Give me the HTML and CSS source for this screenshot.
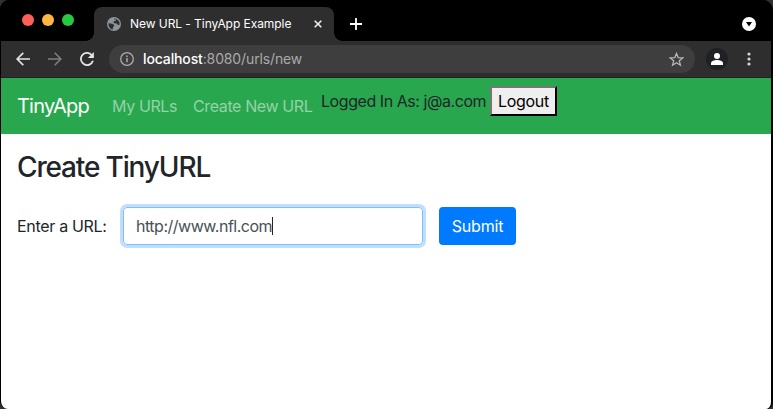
FILE: index.html
```html
<!DOCTYPE html>
<html lang="en">
<head>
<meta charset="utf-8">
<title>New URL - TinyApp Example</title>
<link rel="stylesheet" href="styles.css">
</head>
<body>
<div class="window">
  <div class="tabstrip">
    <div class="lights"><i class="red"></i><i class="yellow"></i><i class="green"></i></div>
    <div class="tab">
      <svg class="globe" width="14" height="14" viewBox="0 0 14 14"><circle cx="7" cy="7" r="7" fill="#8c949c"/><path d="M1.500 6.200 5 6.800l2 1 .2 1.500-1.300.8v2.300C3.200 12.300 1.300 9.500 1.500 6.200ZM7.200 1.400c2.800 0 5 2.200 5.400 4.500l-.3 2.100-1.700-.2-.9-1.300-2.500-.2-1-1.200 1.300-1.100 1.600-.2-.2-1.200-1.900-.2Z" fill="#2e2e2e"/></svg>
      <span class="tab-title">New URL - TinyApp Example</span>
      <svg class="close" width="8" height="8" viewBox="0 0 8 8"><path d="m.7.7 6.600 6.600m0-6.600L.7 7.300" stroke="#eee" stroke-width="1.600"/></svg>
    </div>
    <svg class="plus" width="12" height="12" viewBox="0 0 12 12"><path d="M6 0v12M0 6h12" stroke="#fff" stroke-width="1.800"/></svg>
    <svg class="tab-search" width="14" height="14" viewBox="0 0 14 14"><circle cx="7" cy="7" r="7" fill="#fff"/><path d="M4 5h6L7 9.400Z" fill="#000"/></svg>
  </div>
  <div class="toolbar">
    <svg class="back" width="14" height="14" viewBox="0 0 14 14"><path d="M14 7H1.500M7.300.8 1.100 7l6.200 6.200" fill="none" stroke="#e4e4e4" stroke-width="1.700"/></svg>
    <svg class="forward" width="14" height="14" viewBox="0 0 14 14"><path d="M0 7h12.500M6.700.8 12.900 7l-6.200 6.200" fill="none" stroke="#808080" stroke-width="1.500"/></svg>
    <svg class="reload" width="14" height="14" viewBox="0 0 14 14"><path d="M12.900 8.700A6.100 6.100 0 1 1 11.500 2.800" fill="none" stroke="#e4e4e4" stroke-width="1.800"/><path d="M13.900 0v6H7.900Z" fill="#e4e4e4"/></svg>
    <div class="address">
      <svg class="info" width="14" height="14" viewBox="0 0 14 14"><circle cx="7" cy="7" r="6.300" fill="none" stroke="#aaadb1" stroke-width="1.300"/><path d="M7 6v4.300M7 3.500V5" stroke="#aaadb1" stroke-width="1.500"/></svg>
      <span class="url"><b>localhost</b>:8080/urls/new</span>
      <svg class="star" width="15" height="15" viewBox="0 0 15 15"><path d="m7.500 1.500 1.700 4.100 4.500.3-3.400 2.900 1.100 4.400-3.900-2.400-3.900 2.400 1.100-4.400L1.300 5.900l4.500-.3Z" fill="none" stroke="#b7b8b9" stroke-width="1.300"/></svg>
    </div>
    <svg class="avatar" width="22" height="22" viewBox="0 0 22 22"><circle cx="11" cy="11" r="11" fill="#202125"/><circle cx="11" cy="8" r="3" fill="#fff"/><path d="M5 17v-1.800C5 13 8.500 12 11 12s6 1 6 3.200V17Z" fill="#fff"/></svg>
    <svg class="dots" width="4" height="14" viewBox="0 0 4 14"><g fill="#d6d6d6"><circle cx="2" cy="2" r="1.600"/><circle cx="2" cy="7" r="1.600"/><circle cx="2" cy="12" r="1.600"/></g></svg>
  </div>
  <div class="page">
    <nav class="navbar">
      <a class="brand">TinyApp</a>
      <a class="link my-urls">My URLs</a>
      <a class="link create">Create New URL</a>
      <div class="session"><span class="user">Logged In As: j@a.com</span><button class="logout">Logout</button></div>
    </nav>
    <main>
      <h3>Create TinyURL</h3>
      <form class="form">
        <label class="label">Enter a URL:</label>
        <div class="field"><span class="value">http://www.nfl.com</span><i class="caret"></i></div>
        <button type="button" class="submit">Submit</button>
      </form>
    </main>
  </div>
</div>
</body>
</html>
```
FILE: styles.css
```css
* { box-sizing: border-box; }
body { margin: 0; background: #303030; font: 16px/24px Inter, sans-serif; color: #212529; overflow: hidden; }
svg { display: block; flex: none; }
button { font: inherit; margin: 0; white-space: nowrap; }
.window { width: 773px; height: 409px; border: solid #000; border-width: 0 2px 0 1px; border-radius: 9px 10px 7px 8px; overflow: hidden; background: #000; display: flex; flex-direction: column; }
.tabstrip { height: 41px; flex: none; background: #000; display: flex; align-items: flex-start; }
.lights { display: flex; gap: 8px; padding: 14px 0 0 21px; width: 93px; flex: none; }
.lights i { width: 12px; height: 12px; border-radius: 50%; }
.red { background: #ff5f57; }
.yellow { background: #ffb83d; }
.green { background: #28c840; }
.tab { position: relative; width: 240px; height: 34px; margin-top: 7px; padding: 0 12px 0 13px; border-radius: 8px 8px 0 0; background: #2e2e2e; display: flex; align-items: center; flex: none; }
.tab::before, .tab::after { content: ""; position: absolute; bottom: 0; width: 8px; height: 8px; }
.tab::before { left: -8px; background: radial-gradient(circle at 0 0, transparent 7.5px, #2e2e2e 8px); }
.tab::after { right: -8px; background: radial-gradient(circle at 100% 0, transparent 7.5px, #2e2e2e 8px); }
.tab-title { margin-left: 9px; width: 162px; color: #fff; font-size: 12px; letter-spacing: -.06px; white-space: nowrap; }
.close { margin-left: 22px; }
.plus { margin: 18px 0 0 16px; }
.tab-search { margin: 17px 15px 0 auto; }
.toolbar { height: 37px; flex: none; background: #2e2e2e; border-bottom: 1px solid #212121; display: flex; align-items: center; padding-left: 15px; }
.forward { margin-left: 18px; }
.reload { margin-left: 18px; }
.address { width: 586px; height: 28px; margin-left: 15px; border-radius: 14px; background: #3e3e3e; display: flex; align-items: center; padding: 0 11px; flex: none; }
.url { margin-left: 9px; font-size: 14px; color: #aaa; white-space: nowrap; letter-spacing: -.13px; }
.url b { color: #fff; font-weight: 500; }
.star { margin-left: auto; }
.avatar { margin-left: 11px; }
.dots { margin-left: 19px; }
.page { flex: 1; background: #fff; }
.navbar { height: 56px; padding: 8px 16px; background: #28a74e; display: flex; align-items: center; white-space: nowrap; }
.brand { width: 95px; color: #fff; font-size: 20px; line-height: 30px; letter-spacing: -.8px; }
.link { color: #94d3a6; }
.my-urls { width: 81px; letter-spacing: -.38px; }
.create { width: 128px; letter-spacing: -.38px; }
.session { align-self: flex-start; display: flex; align-items: center; height: 30px; }
.user { width: 169px; letter-spacing: -.44px; }
.logout { width: 67px; height: 30px; padding: 0; border: 2px outset #767676; border-color: #767676 #212121 #212121 #767676; border-radius: 0; background: #efefef; color: #000; letter-spacing: -.3px; }
main { padding: 16px; }
h3 { margin: 0; font-size: 28px; line-height: 34px; font-weight: 550; letter-spacing: -1.15px; }
.form { display: flex; align-items: center; margin-top: 23px; }
.label { width: 106px; letter-spacing: -.31px; white-space: nowrap; }
.field { width: 300px; height: 38px; border: 1px solid #80bdff; border-radius: 4px; box-shadow: 0 0 0 3px #bfdfff; padding: 0 12px; display: flex; align-items: center; color: #495057; }
.value { letter-spacing: -.48px; white-space: nowrap; }
.caret { width: 1px; height: 18px; background: #212529; }
.submit { width: 77px; height: 38px; margin-left: 16px; padding: 0; border: 0; border-radius: 4px; background: #007bff; color: #fff; letter-spacing: -.2px; }
```
